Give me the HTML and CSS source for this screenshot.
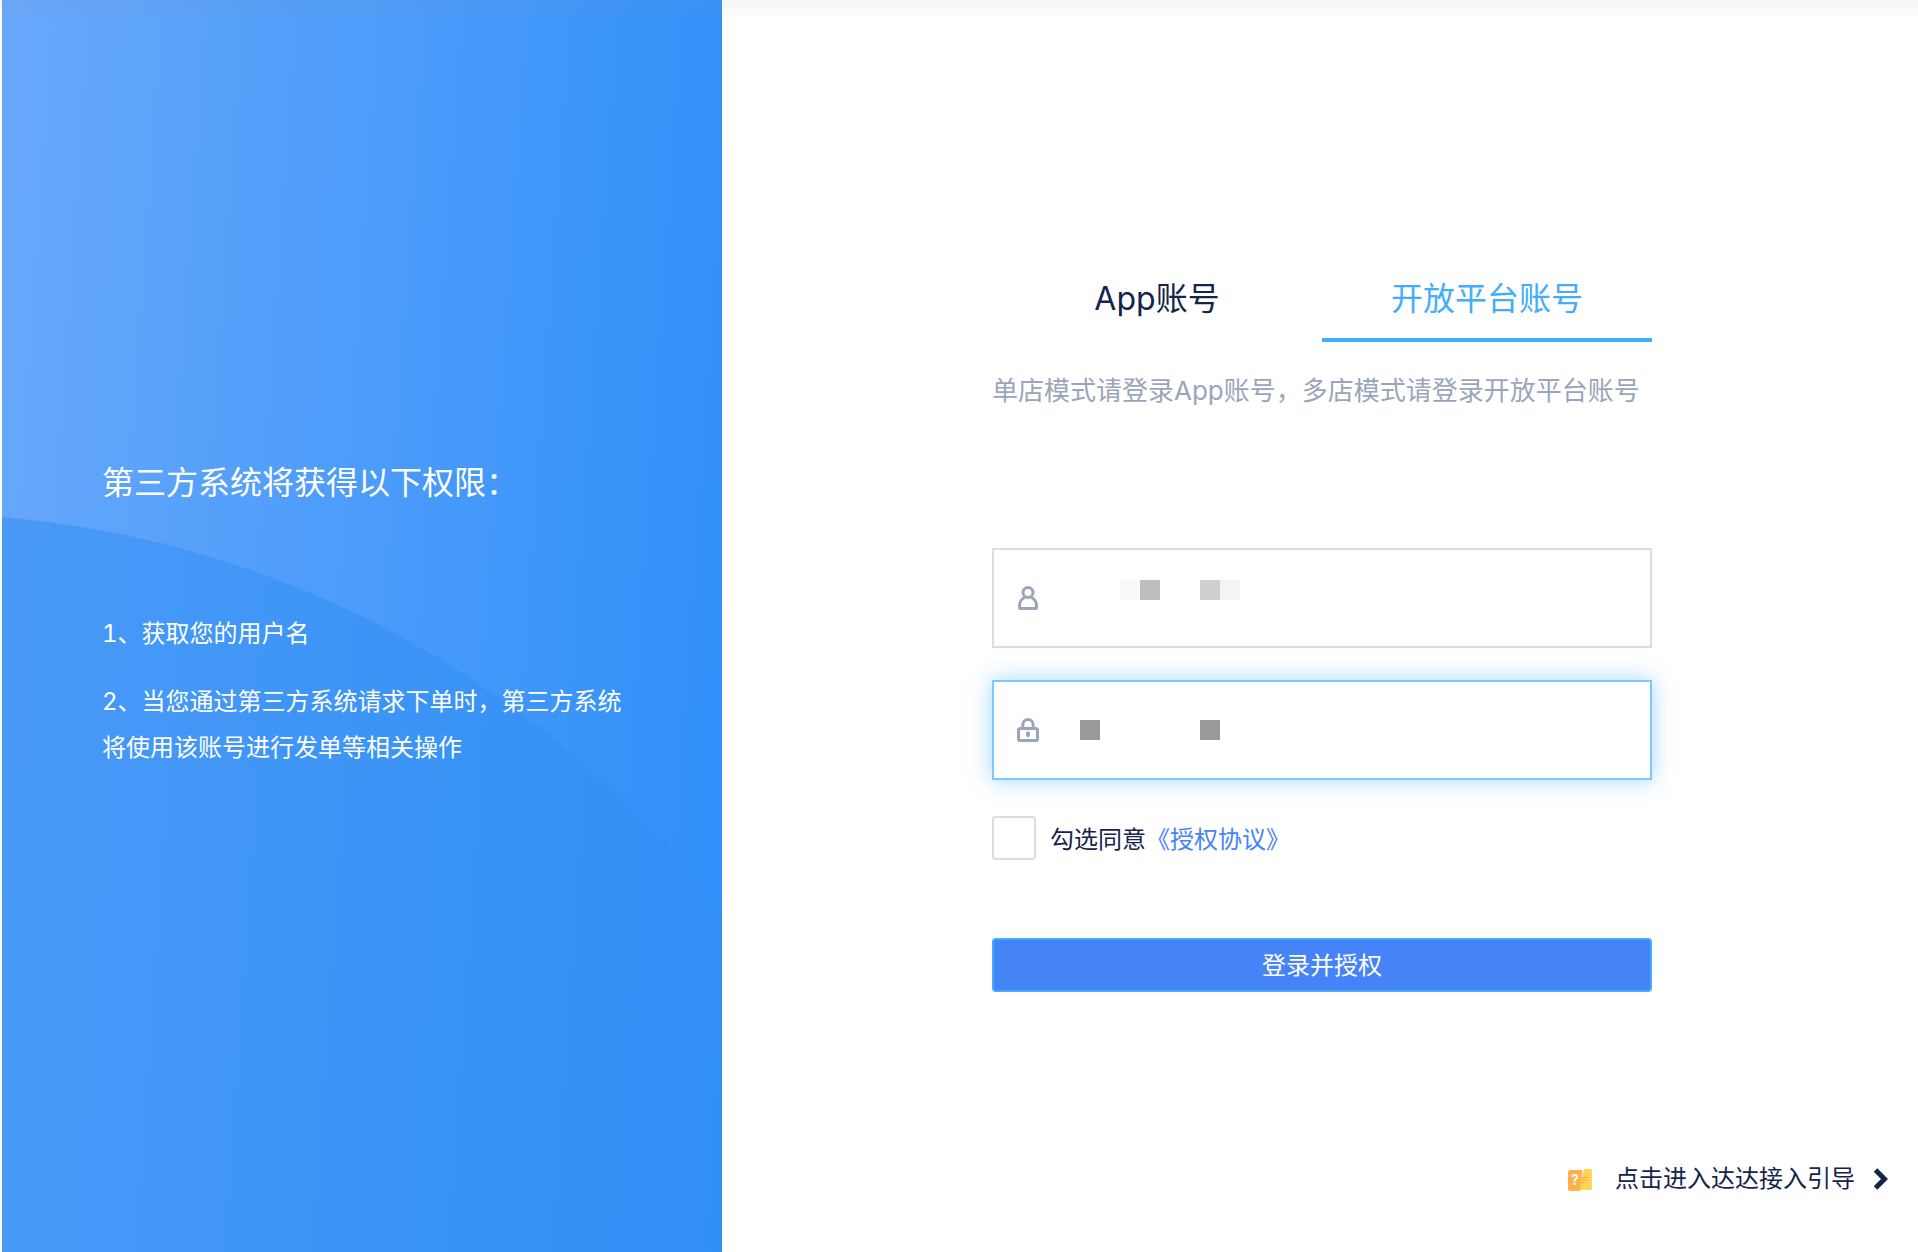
FILE: index.html
```html
<!DOCTYPE html>
<html lang="zh-CN">
<head>
    <meta charset="UTF-8">
    <meta name="viewport" content="width=device-width, initial-scale=1.0">
    <title>登录并授权</title>
    <link rel="stylesheet" href="styles.css">
</head>
<body>
<div class="page">
    <aside class="permission">
        <h1 class="permission-title">第三方系统将获得以下权限：</h1>
        <div class="permission-list">
            <p>1、获取您的用户名</p>
            <p>2、当您通过第三方系统请求下单时，第三方系统将使用该账号进行发单等相关操作</p>
        </div>
    </aside>

    <main class="content">
        <form class="login-form">
            <div class="tabs">
                <button type="button" class="tab">App账号</button>
                <button type="button" class="tab active">开放平台账号</button>
            </div>
            <p class="tips">单店模式请登录App账号，多店模式请登录开放平台账号</p>

            <div class="field">
                <label class="field-icon" for="username" aria-label="用户名">
                    <svg width="24" height="24" viewBox="0 0 24 24" fill="none" stroke="#9aa5bb" stroke-width="3">
                        <circle cx="12" cy="6.5" r="5"/>
                        <path d="M8.5 11.5C5.5 13 3.5 16.5 3.5 20v1.2c0 .8.5 1.3 1.3 1.3h14.4c.8 0 1.3-.5 1.3-1.3V20c0-3.5-2-7-5-8.5" stroke-linejoin="round"/>
                    </svg>
                </label>
                <input type="text" id="username">
                <svg class="mask" width="160" height="20" viewBox="0 0 160 20">
                    <rect x="40" width="20" height="20" fill="#f8faf9"/>
                    <rect x="60" width="20" height="20" fill="#bdbec0"/>
                    <rect x="120" width="20" height="20" fill="#cecfd1"/>
                    <rect x="140" width="20" height="20" fill="#f4f4f4"/>
                </svg>
            </div>

            <div class="field focused">
                <label class="field-icon" for="password" aria-label="密码">
                    <svg width="24" height="24" viewBox="0 0 24 24" fill="none" stroke="#9aa5bb" stroke-width="3">
                        <rect x="2.5" y="10.5" width="19" height="12" rx="1.5"/>
                        <path d="M6.8 10V7a5.2 5.5 0 0 1 10.4 0v3"/>
                        <ellipse cx="12" cy="16.3" rx="2" ry="3" fill="#9aa5bb" stroke="none"/>
                    </svg>
                </label>
                <input type="password" id="password">
                <svg class="mask mask-password" width="160" height="20" viewBox="0 0 160 20">
                    <rect width="20" height="20" fill="#98999b"/>
                    <rect x="120" width="20" height="20" fill="#98999b"/>
                </svg>
            </div>

            <div class="agree">
                <input type="checkbox" id="agree">
                <span><label for="agree">勾选同意</label><a href="#">《授权协议》</a></span>
            </div>

            <button type="submit" class="submit">登录并授权</button>
        </form>

        <a class="guide" href="#">
            <svg width="24" height="24" viewBox="0 0 24 24">
                <path d="M16 2h6a2 2 0 0 1 2 2v17a2 2 0 0 1-2 2H11z" fill="#ffd653"/>
                <path d="M2 3h12.5L12 24H2a2 2 0 0 1-2-2V5a2 2 0 0 1 2-2z" fill="#ffb04c"/>
                <path d="M14 10.5h6M13.5 13h6M13 15.5h4" stroke="#f5a63b"/>
                <text x="3" y="18" class="guide-mark">?</text>
            </svg>
            <span>点击进入达达接入引导</span>
            <svg width="14" height="22" viewBox="0 0 14 22" fill="none" stroke="#15244a" stroke-width="5">
                <path d="M1.5 2l9 9-9 9"/>
            </svg>
        </a>
    </main>
</div>
</body>
</html>
```
FILE: styles.css
```css
* {
    box-sizing: border-box;
}

body {
    margin: 0;
    font-family: Inter, "Noto Sans CJK SC", sans-serif;
    font-size: 24px;
    font-variant-numeric: tabular-nums;
    color: #15244a;
    background-color: #fff;
}

button,
input {
    font: inherit;
}

h1,
p {
    margin: 0;
}

a {
    color: #4583f7;
    text-decoration: none;
}

.page {
    position: relative;
    display: flex;
    min-height: 100vh;
    padding-left: 2px;
}

/* shadow cast by the top edge */
.page::before {
    content: "";
    position: absolute;
    top: 0;
    left: 0;
    right: 0;
    height: 20px;
    background: linear-gradient(rgba(140, 140, 140, 0.08), rgba(140, 140, 140, 0));
}

.permission {
    flex: 0 0 720px;
    padding: 459px 100px 0;
    color: #fff;
    background:
        radial-gradient(circle 1013px at -85px 1526px, rgba(50, 143, 243, 0.55) 1012px, transparent 1013px),
        linear-gradient(94deg, #68a8fb, #2e8ff9);
}

.permission-title {
    font-size: 32px;
    font-weight: 400;
    line-height: 48px;
}

.permission-list {
    display: flex;
    flex-direction: column;
    gap: 22px;
    margin-top: 104px;
    line-height: 46px;
}

.content {
    flex: 1;
    display: flex;
    flex-direction: column;
    padding: 256px 30px 54px 34px;
}

.login-form {
    display: flex;
    flex-direction: column;
    width: 100%;
    max-width: 660px;
    margin: 0 auto;
}

.tabs {
    display: flex;
}

.tab {
    flex: 1;
    height: 86px;
    padding: 4px 0 0;
    font-size: 32px;
    line-height: 48px;
    color: #15244a;
    background: none;
    border: none;
    border-bottom: 4px solid transparent;
    cursor: pointer;
}

.tab.active {
    color: #42adff;
    border-bottom-color: #42adff;
}

.tips {
    margin: 30px 0 138px;
    font-size: 26px;
    line-height: 38px;
    color: #9aa5bb;
}

.field {
    position: relative;
    display: flex;
    align-items: center;
    height: 100px;
    padding: 0 22px;
    border: 2px solid #dcdcdc;
}

.field + .field {
    margin-top: 32px;
}

.field.focused {
    border-color: #7ac8ff;
    box-shadow: 0 0 20px rgba(66, 173, 255, 0.5);
}

.field-icon {
    display: flex;
}

.field input {
    flex: 1;
    height: 100%;
    padding: 0 0 0 40px;
    border: none;
    outline: none;
    background: none;
}

.mask {
    position: absolute;
    top: 30px;
    left: 86px;
}

.mask-password {
    top: 38px;
}

.agree {
    display: flex;
    align-items: center;
    gap: 14px;
    margin: 36px 0 78px;
    line-height: 36px;
}

.agree span {
    padding-top: 4px;
}

.agree input {
    appearance: none;
    width: 44px;
    height: 44px;
    margin: 0;
    border: 2px solid #dcdcdc;
    border-radius: 4px;
}

.agree input:checked {
    background-color: #4583f7;
}

.submit {
    height: 54px;
    padding: 2px 0 0;
    line-height: 36px;
    color: #fff;
    background-color: #4583f7;
    border: 2px solid #42adff;
    border-radius: 4px;
    cursor: pointer;
}

.guide {
    display: flex;
    align-items: center;
    align-self: flex-end;
    margin-top: auto;
    line-height: 38px;
    color: #15244a;
}

.guide span {
    margin: 0 19px 0 23px;
}

.guide-mark {
    font-size: 14px;
    font-weight: 700;
    fill: #fff;
}
```
